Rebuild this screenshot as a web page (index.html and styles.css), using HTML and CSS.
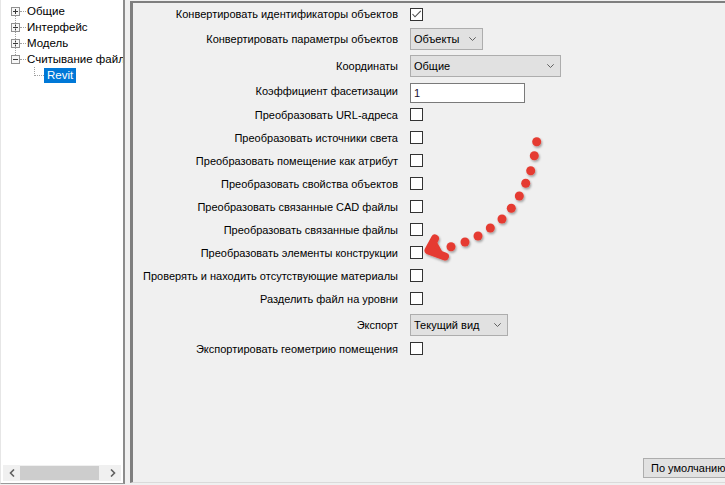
FILE: index.html
```html
<!DOCTYPE html>
<html lang="ru">
<head>
<meta charset="utf-8">
<title>Настройки</title>
<link rel="stylesheet" href="styles.css">
</head>
<body>
<div class="window">
  <div class="left">
    <div class="tree">
      <div class="node"><svg class="exp" width="9" height="9" viewBox="0 0 9 9"><rect x="0.5" y="0.5" width="8" height="8" fill="#f7f7f7" stroke="#919191"/><path d="M2 4.5H7M4.5 2V7" stroke="#3a3a3a"/></svg><span class="conn"></span><span class="lbl">Общие</span></div>
      <div class="node"><svg class="exp" width="9" height="9" viewBox="0 0 9 9"><rect x="0.5" y="0.5" width="8" height="8" fill="#f7f7f7" stroke="#919191"/><path d="M2 4.5H7M4.5 2V7" stroke="#3a3a3a"/></svg><span class="conn"></span><span class="lbl">Интерфейс</span></div>
      <div class="node"><svg class="exp" width="9" height="9" viewBox="0 0 9 9"><rect x="0.5" y="0.5" width="8" height="8" fill="#f7f7f7" stroke="#919191"/><path d="M2 4.5H7M4.5 2V7" stroke="#3a3a3a"/></svg><span class="conn"></span><span class="lbl">Модель</span></div>
      <div class="node"><svg class="exp" width="9" height="9" viewBox="0 0 9 9"><rect x="0.5" y="0.5" width="8" height="8" fill="#f7f7f7" stroke="#919191"/><path d="M2 4.5H7" stroke="#3a3a3a"/></svg><span class="conn"></span><span class="lbl">Считывание файлов</span></div>
      <div class="node child"><span class="elbow"></span><span class="lbl sel">Revit</span></div>
    </div>
    <div class="hscroll">
      <span class="sbtn"><svg width="6" height="8" viewBox="0 0 6 8"><path d="M5 0.5L1.5 4L5 7.5" fill="none" stroke="#606060" stroke-width="1.6"/></svg></span>
      <span class="thumb"></span>
      <span class="track"></span>
      <span class="sbtn"><svg width="6" height="8" viewBox="0 0 6 8"><path d="M1 0.5L4.5 4L1 7.5" fill="none" stroke="#606060" stroke-width="1.6"/></svg></span>
    </div>
  </div>

  <div class="right">
    <div class="form">
      <span class="lbl">Конвертировать идентификаторы объектов</span>
      <span class="cb"><svg width="11" height="11" viewBox="0 0 11 11"><path d="M1.5 5L4 7.8L9.8 1.8" fill="none" stroke="#4d4d4d" stroke-width="1.1"/></svg></span>

      <span class="lbl">Конвертировать параметры объектов</span>
      <span class="combo w73"><span class="ctext">Объекты</span><svg class="chev" width="7" height="4" viewBox="0 0 7 4"><path d="M0.3 0.3L3.5 3.5L6.7 0.3" fill="none" stroke="#606060"/></svg></span>

      <span class="lbl">Координаты</span>
      <span class="combo w151"><span class="ctext">Общие</span><svg class="chev" width="7" height="4" viewBox="0 0 7 4"><path d="M0.3 0.3L3.5 3.5L6.7 0.3" fill="none" stroke="#606060"/></svg></span>

      <span class="lbl">Коэффициент фасетизации</span>
      <span class="textbox">1</span>

      <span class="lbl">Преобразовать URL-адреса</span>
      <span class="cb"></span>

      <span class="lbl">Преобразовать источники света</span>
      <span class="cb"></span>

      <span class="lbl">Преобразовать помещение как атрибут</span>
      <span class="cb"></span>

      <span class="lbl">Преобразовать свойства объектов</span>
      <span class="cb"></span>

      <span class="lbl">Преобразовать связанные CAD файлы</span>
      <span class="cb"></span>

      <span class="lbl">Преобразовать связанные файлы</span>
      <span class="cb"></span>

      <span class="lbl">Преобразовать элементы конструкции</span>
      <span class="cb"></span>

      <span class="lbl">Проверять и находить отсутствующие материалы</span>
      <span class="cb"></span>

      <span class="lbl">Разделить файл на уровни</span>
      <span class="cb"></span>

      <span class="lbl">Экспорт</span>
      <span class="combo w98"><span class="ctext">Текущий вид</span><svg class="chev" width="7" height="4" viewBox="0 0 7 4"><path d="M0.3 0.3L3.5 3.5L6.7 0.3" fill="none" stroke="#606060"/></svg></span>

      <span class="lbl">Экспортировать геометрию помещения</span>
      <span class="cb"></span>
    </div>
    <div class="footer">
      <button class="btn" type="button">По умолчанию</button>
    </div>
  </div>

  <svg class="arrow" width="725" height="485" viewBox="0 0 725 485">
    <defs>
      <filter id="sh" x="-20%" y="-20%" width="140%" height="140%">
        <feDropShadow dx="1" dy="1.6" stdDeviation="0.9" flood-color="#000" flood-opacity="0.35"/>
      </filter>
    </defs>
    <g fill="#e53b30" filter="url(#sh)">
      <circle cx="536.7" cy="141.7" r="4.5"/>
      <circle cx="534.3" cy="155.7" r="4.5"/>
      <circle cx="530.7" cy="170.7" r="4.5"/>
      <circle cx="525.7" cy="183.3" r="4.5"/>
      <circle cx="519.3" cy="196" r="4.5"/>
      <circle cx="511.3" cy="208.3" r="4.5"/>
      <circle cx="502" cy="219" r="4.5"/>
      <circle cx="490.3" cy="228" r="4.5"/>
      <circle cx="478" cy="236" r="4.5"/>
      <circle cx="465" cy="242" r="4.5"/>
      <circle cx="451" cy="246.7" r="4.5"/>
      <path d="M435 238.5L428.5 250.5L445 256.5" fill="#e53b30" stroke="#e53b30" stroke-width="8" stroke-linejoin="round" stroke-linecap="round"/>
    </g>
  </svg>
</div>
</body>
</html>
```

FILE: styles.css
```css
* {
  box-sizing: border-box;
}

html,
body {
  margin: 0;
  height: 100%;
}

body {
  background: #f0f0f0;
  font-family: "Liberation Sans", Arial, sans-serif;
  font-size: 11px;
  color: #000;
  overflow: hidden;
}

.window {
  position: relative;
  display: flex;
  width: 725px;
  height: 485px;
}

/* ---------- left tree panel ---------- */
.left {
  flex: 0 0 125px;
  width: 125px;
  min-width: 0;
  overflow: hidden;
  height: 484px;
  background: #fff;
  border-left: 1px solid #e6e6e6;
  border-right: 2px solid #8c8c8c;
  border-bottom: 1px solid #9a9a9a;
  display: flex;
  flex-direction: column;
}

.tree {
  position: relative;
  flex: 1;
  min-width: 0;
  padding-top: 3px;
  overflow: hidden;
  white-space: nowrap;
  font-size: 11.5px;
}

.tree::before {
  content: "";
  position: absolute;
  left: 14px;
  top: 16px;
  height: 39px;
  border-left: 1px dotted #a0a0a0;
}

.node {
  display: flex;
  align-items: center;
  height: 16px;
  padding-left: 10px;
}

.exp {
  flex: 0 0 9px;
  display: block;
}

.conn {
  flex: 0 0 6px;
  height: 1px;
  border-top: 1px dotted #a0a0a0;
}

.node .lbl {
  padding-left: 1px;
}

.node.child {
  padding-left: 0;
}

.elbow {
  align-self: flex-start;
  flex: 0 0 10px;
  height: 9px;
  margin-left: 33px;
  border-left: 1px dotted #a0a0a0;
  border-bottom: 1px dotted #a0a0a0;
}

.node .sel {
  background: #0078d7;
  color: #fff;
  height: 15px;
  line-height: 15px;
  padding: 0 3px;
}

.hscroll {
  display: flex;
  flex: 0 0 16px;
  height: 16px;
  margin: 0 2px 2px 2px;
  background: #f0f0f0;
}

.sbtn {
  flex: 0 0 17px;
  display: flex;
  align-items: center;
  justify-content: center;
}

.thumb {
  flex: 0 0 79px;
  margin: 1px 0 1px;
  background: #cdcdcd;
}

.track {
  flex: 1;
}

/* ---------- right settings panel ---------- */
.right {
  flex: 1;
  margin-left: 5px;
  margin-top: 1px;
  height: 482px;
  border-left: 3px solid #7f7f7f;
  border-top: 2px solid #7f7f7f;
  border-bottom: 1px solid #dadada;
  display: flex;
  flex-direction: column;
  min-width: 0;
  overflow: hidden;
}

.form {
  display: grid;
  grid-template-columns: 265px 1fr;
  grid-template-rows: 22px 27px 27px 24px repeat(9, 23px) 29px 19px;
  column-gap: 12px;
}

.form .lbl {
  justify-self: end;
  align-self: center;
  white-space: nowrap;
  line-height: 14px;
}

.cb {
  justify-self: start;
  align-self: center;
  width: 13px;
  height: 13px;
  border: 1px solid #333;
  background: #fff;
  display: flex;
}

.combo {
  justify-self: start;
  align-self: center;
  height: 22px;
  background: #e1e1e1;
  border: 1px solid #adadad;
  display: flex;
  align-items: center;
  justify-content: space-between;
  padding: 0 6px 0 3px;
  white-space: nowrap;
}

.w73 { width: 73px; }
.w151 { width: 151px; }
.w98 { width: 98px; }

.chev {
  display: block;
  flex: 0 0 7px;
}

.textbox {
  justify-self: start;
  align-self: end;
  width: 115px;
  height: 20px;
  background: #fff;
  border: 1px solid #7a7a7a;
  padding-left: 3px;
  line-height: 18px;
  color: #1a1030;
}

.footer {
  margin-top: auto;
  display: flex;
  justify-content: flex-end;
  padding-bottom: 4px;
}

.btn {
  flex: 0 0 90px;
  width: 90px;
  height: 20px;
  margin-right: -8px;
  background: #e1e1e1;
  border: 1px solid #adadad;
  font: inherit;
  color: #000;
  text-align: left;
  white-space: nowrap;
  padding: 0 0 0 7px;
}

/* ---------- annotation overlay ---------- */
.arrow {
  position: absolute;
  left: 0;
  top: 0;
  pointer-events: none;
}
```
